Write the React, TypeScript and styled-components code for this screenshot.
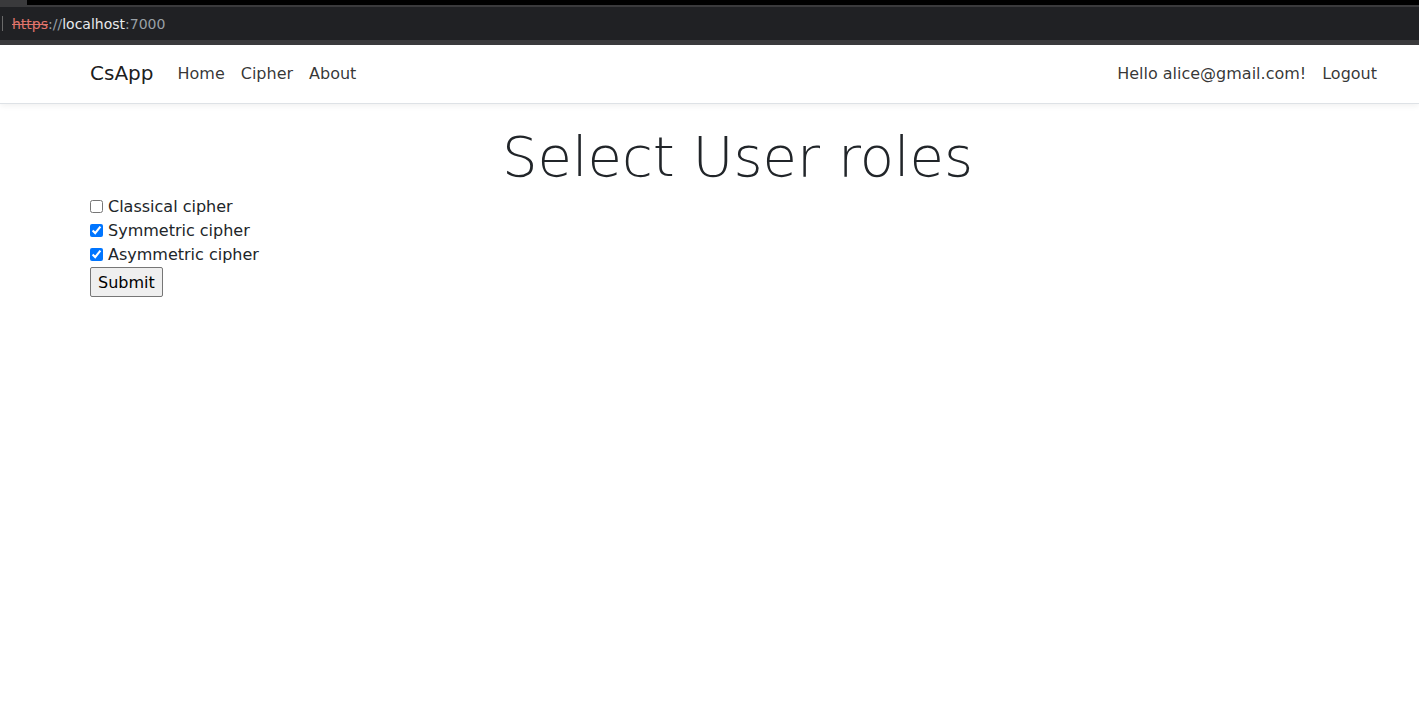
import React, { useState } from 'react'
import styled, { createGlobalStyle } from 'styled-components'

const GlobalStyle = createGlobalStyle`
  html, body {
    margin: 0;
    padding: 0;
    background: #fff;
    font-family: "DejaVu Sans", "Noto Sans", sans-serif;
    font-size: 16px;
    color: #212529;
  }
`

const Chrome = styled.div`
  background: #000;
  height: 45px;
  display: flex;
  flex-direction: column;
`

const TabStrip = styled.div`
  height: 5px;
  display: flex;
`

const TabStub = styled.div`
  width: 27px;
  background: #3a3a3c;
`

const TabBlack = styled.div`
  flex: 1;
  background: #000;
  border-top-left-radius: 6px;
`

const UrlBar = styled.div`
  flex: 1;
  background: #202124;
  border-top: 2px solid #3a3a3c;
  border-bottom: 5px solid #3a3a3c;
  display: flex;
  align-items: center;
  padding-left: 2px;
  font-size: 14px;
  font-family: "DejaVu Sans", sans-serif;
`

const Caret = styled.span`
  width: 1px;
  height: 15px;
  background: #6a6a6a;
  margin-right: 9px;
`

const Scheme = styled.span`
  color: #e0746c;
  text-decoration: line-through;
`

const Dim = styled.span`
  color: #9aa0a6;
`

const Host = styled.span`
  color: #e8eaed;
`

const Navbar = styled.nav`
  box-sizing: border-box;
  height: 59px;
  background: #fff;
  border-bottom: 1px solid #dee2e6;
  box-shadow: 0 2px 6px rgba(0, 0, 0, 0.06);
  display: flex;
  align-items: center;
  padding: 0 34px 2px 90px;
`

const Brand = styled.a`
  font-size: 20px;
  color: rgba(0, 0, 0, 0.9);
  margin-right: 16px;
  text-decoration: none;
`

const NavList = styled.div<{ $end?: boolean }>`
  display: flex;
  margin-left: ${(p) => (p.$end ? 'auto' : '0')};
`

const NavLink = styled.a`
  padding: 8px;
  color: rgba(0, 0, 0, 0.8);
  text-decoration: none;
`

const Main = styled.main`
  padding: 0 34px 0 90px;
`

const Title = styled.h1`
  font-size: 56px;
  font-weight: 300;
  line-height: 1.2;
  text-align: center;
  margin: 19px 0 4px;
  color: #212529;
`

const Row = styled.label`
  display: flex;
  align-items: center;
  height: 24px;
`

const Box = styled.input`
  width: 13px;
  height: 13px;
  margin: 0 5px 0 0;
`

const SubmitBtn = styled.button`
  font-family: "DejaVu Sans", sans-serif;
  font-size: 16px;
  padding: 3px 7px;
  margin-top: 1px;
  height: 30px;
  border: 1px solid #767676;
  border-radius: 2px;
  background: #efefef;
  color: #000;
`

const roles = ['Classical cipher', 'Symmetric cipher', 'Asymmetric cipher']

export default function App() {
  const [checked, setChecked] = useState([false, true, true])

  const toggle = (i: number) => {
    setChecked((prev) => prev.map((v, j) => (j === i ? !v : v)))
  }

  return (
    <>
      <GlobalStyle />
      <Chrome>
        <TabStrip>
          <TabStub />
          <TabBlack />
        </TabStrip>
        <UrlBar>
          <Caret />
          <Scheme>https</Scheme>
          <Dim>://</Dim>
          <Host>localhost</Host>
          <Dim>:7000</Dim>
        </UrlBar>
      </Chrome>
      <Navbar>
        <Brand href="#">CsApp</Brand>
        <NavList>
          <NavLink href="#">Home</NavLink>
          <NavLink href="#">Cipher</NavLink>
          <NavLink href="#">About</NavLink>
        </NavList>
        <NavList $end>
          <NavLink href="#">Hello alice@gmail.com!</NavLink>
          <NavLink href="#">Logout</NavLink>
        </NavList>
      </Navbar>
      <Main>
        <Title>Select User roles</Title>
        <form onSubmit={(e) => e.preventDefault()}>
          {roles.map((r, i) => (
            <Row key={r}>
              <Box type="checkbox" checked={checked[i]} onChange={() => toggle(i)} />
              {r}
            </Row>
          ))}
          <SubmitBtn type="submit">Submit</SubmitBtn>
        </form>
      </Main>
    </>
  )
}
